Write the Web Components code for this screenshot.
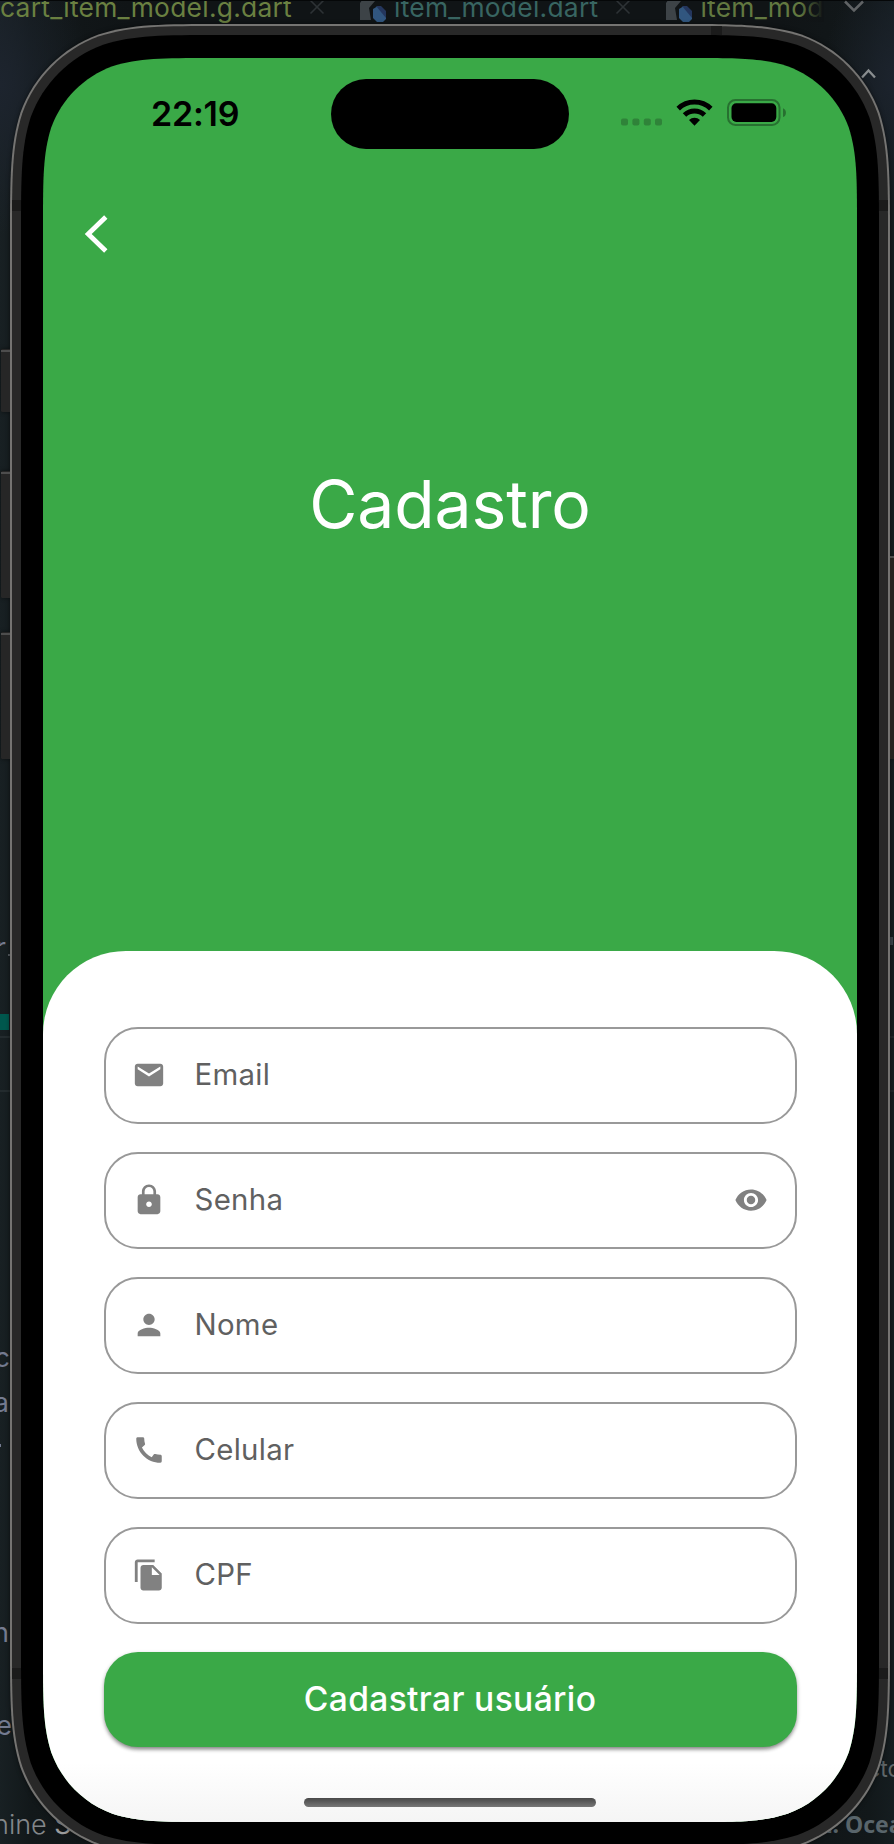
<!DOCTYPE html>
<html lang="pt-BR">
<head>
<meta charset="utf-8">
<title>Cadastro</title>
<style>
html,body{margin:0;width:894px;height:1844px;overflow:hidden;background:#161e21;font-family:Inter,"Liberation Sans",sans-serif}
</style>
</head>
<body>
<desk-scene>
  <code-desktop slot="back"></code-desktop>
  <phone-shell>
    <status-bar slot="status"></status-bar>
    <register-page></register-page>
  </phone-shell>
</desk-scene>
<script>
const define = (name, html, setup) => {
  const t = document.createElement('template');
  t.innerHTML = html;
  customElements.define(name, class extends HTMLElement {
    constructor(){ super(); this.attachShadow({mode:'open'}).append(t.content.cloneNode(true)); }
    connectedCallback(){ if (setup) setup(this, this.shadowRoot); }
  });
};

// Rounded rectangle with continuous-curvature corners.
const smoothRect = (x, y, w, h, r) => {
  const k = [1.52866498, 1.08849296, 0.86840694, 0.63149379, 0.07491139, 0.37282383, 0.16905956].map(v => v * r);
  const [a,b,c,d,e,f,g] = k, X = x + w, Y = y + h;
  return `M${x+a} ${y}L${X-a} ${y}C${X-b} ${y} ${X-c} ${y} ${X-d} ${y+e}C${X-f} ${y+g} ${X-g} ${y+f} ${X-e} ${y+d}C${X} ${y+c} ${X} ${y+b} ${X} ${y+a}`
   + `L${X} ${Y-a}C${X} ${Y-b} ${X} ${Y-c} ${X-e} ${Y-d}C${X-g} ${Y-f} ${X-f} ${Y-g} ${X-d} ${Y-e}C${X-c} ${Y} ${X-b} ${Y} ${X-a} ${Y}`
   + `L${x+a} ${Y}C${x+b} ${Y} ${x+c} ${Y} ${x+d} ${Y-e}C${x+f} ${Y-g} ${x+g} ${Y-f} ${x+e} ${Y-d}C${x} ${Y-c} ${x} ${Y-b} ${x} ${Y-a}`
   + `L${x} ${y+a}C${x} ${y+b} ${x} ${y+c} ${x+e} ${y+d}C${x+g} ${y+f} ${x+f} ${y+g} ${x+d} ${y+e}C${x+c} ${y} ${x+b} ${y} ${x+a} ${y}Z`;
};

define('desk-scene', `<style>
:host{display:block;position:relative;width:894px;height:1844px;overflow:hidden}
.back{position:absolute;inset:0}
.front{position:relative;padding:24px 0 0 10px}
</style><div class="back"><slot name="back"></slot></div><div class="front"><slot></slot></div>`);

define('editor-tab', `<style>
:host{display:flex;align-items:center;color:var(--c);font-size:26.4px;line-height:30px;white-space:nowrap;height:30px}
svg{display:block;flex:none}
.name{flex:none;letter-spacing:.25px}
.icon{margin-right:6px}
.x{margin-left:17px}
:host([first]) .icon,:host([last]) .x{display:none}
</style>
<svg class="icon" width="28" height="30" viewBox="0 0 28 30"><path d="M0 11L8 0H21V9H15L9 16L11 28H0Z" fill="#3d4347"/><path d="M13 17L18 14L26 22V27L23 30H17L13 26Z" fill="#31567f"/><path d="M16 14H21L26 19V26Z" fill="#24365d"/></svg>
<span class="name"><slot></slot></span>
<svg class="x" width="16" height="16" viewBox="0 0 16 16"><path d="M1.5 1.5L14.5 14.5M14.5 1.5L1.5 14.5" stroke="#2d3235" stroke-width="1.6"/></svg>`);

define('code-desktop', `<style>
:host{display:block;position:relative;width:894px;height:1844px;overflow:hidden;
background:radial-gradient(90px 150px at 0 85px,#1d242e,transparent),radial-gradient(70px 120px at 894px 80px,#1c232d,transparent),linear-gradient(90deg,#182023,#12181a 30px,#101416 130px,#101416 780px,#12181a 870px,#151d20)}
.top{position:absolute;left:0;top:0;right:0;height:1px;background:#050708}
.tabs{position:absolute;left:0;top:-8px;display:flex;width:824px}
editor-tab:nth-child(2){margin-left:35px}
editor-tab:nth-child(3){margin-left:35px}
.tabs:after{content:"";position:absolute;right:0;top:0;width:24px;height:30px;background:linear-gradient(90deg,transparent,#101416)}
.bit{position:absolute;overflow:hidden;white-space:nowrap;color:#747b90;font-size:27px;line-height:30px;height:30px}
.l{left:0;display:flex;justify-content:flex-end}
.bar{position:absolute}
svg{position:absolute}
</style>
<div class="tabs"><editor-tab first style="--c:#6a8041">cart_item_model.g.dart</editor-tab><editor-tab style="--c:#386561">item_model.dart</editor-tab><editor-tab last style="--c:#627840">item_mod</editor-tab></div>
<div class="top"></div>
<svg style="left:842px;top:0" width="24" height="14" viewBox="0 0 24 14"><path d="M3 1.5L12 10.5L21 1.5" fill="none" stroke="#606365" stroke-width="2.5"/></svg>
<svg style="left:858px;top:64px" width="20" height="18" viewBox="0 0 20 18"><path d="M4 13.5L10.5 6.5L17 13.5" fill="none" stroke="#898d8f" stroke-width="2.3"/></svg>
<div class="bit l" style="width:6px;top:933px;height:13px">r</div>
<div class="bar" style="left:8px;top:954px;width:3px;height:2px;background:#555b60"></div>
<div class="bar" style="left:0;top:1014px;width:9px;height:16px;background:#00574d"></div>
<div class="bar" style="left:0;top:1036px;width:10px;height:2px;background:#232b2e"></div>
<div class="bar" style="left:0;top:1090px;width:10px;height:2px;background:#232b2e"></div>
<div class="bit l" style="width:10px;top:1343px">c</div>
<div class="bit l" style="width:9px;top:1388px">a</div>
<div class="bar" style="left:0;top:1444px;width:1px;height:3px;background:#747b90"></div>
<div class="bit l" style="width:9px;top:1618px">n</div>
<div class="bit l" style="width:12px;top:1711px">e</div>
<div class="bit" style="left:-7px;top:1810px;font-weight:300;color:#83878a">nine <b style="color:#9b9c9d">St</b></div>
<div class="bar" style="left:890px;top:937px;width:3px;height:8px;background:#3d454c"></div>
<div class="bar" style="left:890px;top:1036px;width:4px;height:2px;background:#20272a"></div>
<div class="bar" style="left:890px;top:1090px;width:4px;height:2px;background:#20272a"></div>
<div class="bit" style="left:867px;top:1754px;width:40px;font-size:23px;color:#5f6669">ctor</div>
<div class="bit" style="left:826px;top:1809px;font-size:23px;font-weight:700;color:#59656b;font-family:'Noto Sans'">r. Ocean</div>`);

define('phone-shell', `<style>
:host{display:block;position:relative;width:880px;height:1832px}
.art{position:absolute;left:-10px;top:-24px;display:block;filter:drop-shadow(0 0 2px #0008)}
.wrap{box-sizing:border-box;position:relative;padding:34px 33px}
.screen{position:relative;display:flex;flex-direction:column;width:814px;height:1764px;background:#3aa947;overflow:hidden}
.home{position:absolute;left:0;right:0;bottom:0;height:60px;display:flex;justify-content:center;align-items:flex-end;background:linear-gradient(#fff0,#f5f5f5)}
.home i{width:292px;height:9.5px;margin-bottom:15px;border-radius:5px;background:linear-gradient(#484848,#777)}
</style>
<svg class="art" width="894" height="1860" viewBox="0 0 894 1860">
<g fill="#262626"><rect x="1" y="349" width="12" height="63" rx="1.5"/><rect x="1" y="471" width="12" height="127" rx="1.5"/><rect x="1" y="632" width="12" height="127" rx="1.5"/><rect x="887" y="556" width="12" height="203" fill="#25221f"/></g>
<path d="M1 351H10M1 473H10M1 634H10M890 557H894" stroke="#4d4d4d" stroke-width="2"/>
<path id="rim" fill="#757472"/><path id="body" fill="#282828"/>
<path d="M12 200h9v11h-9zM879 200h9v11h-9zM711 26h11v9h-11zM12 1668h9v11h-9zM879 1668h9v11h-9z" fill="#1b1b1b"/>
<path id="glass"/></svg>
<div class="wrap"><div class="screen"><slot name="status"></slot><slot></slot><div class="home"><i></i></div></div></div>`,
(h, s) => {
  s.getElementById('rim').setAttribute('d', smoothRect(10, 24, 880, 1832, 140));
  s.getElementById('body').setAttribute('d', smoothRect(12, 26, 876, 1828, 138));
  s.getElementById('glass').setAttribute('d', smoothRect(21, 35, 858, 1810, 130));
  s.querySelector('.screen').style.clipPath = `path("${smoothRect(0, 0, 814, 1764, 110)}")`;
});

define('status-bar', `<style>
:host{display:flex;height:91px;flex:none;padding-top:21px;box-sizing:border-box;align-items:flex-start}
.time{box-sizing:border-box;width:288px;padding:14px 0 0 108px;font-size:34px;line-height:42px;font-weight:600;letter-spacing:-.2px;color:#000}
.island{width:238px;height:70px;border-radius:35px;background:#000}
svg{margin:16px 0 0 48px}
</style><div class="time">22:19</div><div class="island"></div>
<svg width="172" height="36" viewBox="0 0 172 36">
<g fill="#2f8339" transform="translate(-617,-95)"><rect x="621" y="118.5" width="7" height="7" rx="2"/><rect x="632.4" y="118.5" width="7" height="7" rx="2"/><rect x="643.8" y="118.5" width="7" height="7" rx="2"/><rect x="655" y="118.5" width="7" height="7" rx="2"/></g>
<g transform="translate(-617,-95)"><g fill="none" stroke="#000" stroke-width="5"><path d="M678.2 108.6A23.5 23.5 0 0 1 710.8 108.6"/><path d="M684.5 115A14.5 14.5 0 0 1 704.5 115"/></g><path d="M694.5 125.8L689 120A8 8 0 0 1 700 120Z"/>
<rect x="728" y="100" width="51.5" height="25" rx="7.5" fill="none" stroke="#277030" stroke-width="2"/><rect x="731.5" y="103.3" width="44.8" height="18.6" rx="4.8"/><path d="M783 108.3A4.7 4.7 0 0 1 783 117Z" fill="#277030"/></g></svg>`);

define('register-page', `<style>
:host{display:flex;flex-direction:column;flex:1}
header{height:802px;flex:none;display:flex;flex-direction:column}
.back{display:block;margin:63px 0 0 37.5px;width:32px;height:44px;flex:none}
h1{margin:208px 0 0;text-align:center;color:#fff;font-weight:400;font-size:66px;line-height:80px;letter-spacing:-.1px}
main{flex:1;background:#fff;border-radius:83px 83px 0 0;padding:76px 60.5px 0 60.5px;display:flex;flex-direction:column;gap:28.5px}
</style>
<header><svg class="back" viewBox="0 0 32 44"><path d="M24.8 5L7.2 22L24.8 39" fill="none" stroke="#fff" stroke-width="4.8"/></svg><h1>Cadastro</h1></header>
<main>
<form-field icon="mail">Email</form-field>
<form-field icon="lock" reveal>Senha</form-field>
<form-field icon="person">Nome</form-field>
<form-field icon="phone">Celular</form-field>
<form-field icon="copy">CPF</form-field>
<primary-button>Cadastrar usuário</primary-button>
</main>`);

const ICONS = {
  mail:'M20 4H4c-1.1 0-1.99.9-1.99 2L2 18c0 1.1.9 2 2 2h16c1.1 0 2-.9 2-2V6c0-1.1-.9-2-2-2zm0 4l-8 5-8-5V6l8 5 8-5v2z',
  lock:'M18 8h-1V6c0-2.76-2.24-5-5-5S7 3.24 7 6v2H6c-1.1 0-2 .9-2 2v10c0 1.1.9 2 2 2h12c1.1 0 2-.9 2-2V10c0-1.1-.9-2-2-2zm-6 9c-1.1 0-2-.9-2-2s.9-2 2-2 2 .9 2 2-.9 2-2 2zm3.1-9H8.9V6c0-1.71 1.39-3.1 3.1-3.1s3.1 1.39 3.1 3.1v2z',
  person:'M12 12c2.21 0 4-1.79 4-4s-1.79-4-4-4-4 1.79-4 4 1.79 4 4 4zm0 2c-2.67 0-8 1.34-8 4v2h16v-2c0-2.66-5.33-4-8-4z',
  phone:'M20.01 15.38c-1.23 0-2.42-.2-3.53-.56-.35-.12-.74-.03-1.01.24l-1.57 1.97c-2.83-1.35-5.48-3.9-6.89-6.83l1.95-1.66c.27-.28.35-.67.24-1.02-.37-1.11-.56-2.3-.56-3.53 0-.54-.45-.99-.99-.99H4.19C3.65 3 3 3.24 3 3.99 3 13.28 10.73 21 20.01 21c.71 0 .99-.63.99-1.18v-3.45c0-.54-.45-.99-.99-.99z',
  copy:'M16 1H4c-1.1 0-2 .9-2 2v14h2V3h12V1zm-1 4l6 6v10c0 1.1-.9 2-2 2H7.99C6.89 23 6 22.1 6 21l.01-14c0-1.1.89-2 1.99-2h7zm-1 7h5.5L14 6.5V12z',
  eye:'M12 4.5C7 4.5 2.73 7.61 1 12c1.73 4.39 6 7.5 11 7.5s9.27-3.11 11-7.5c-1.73-4.39-6-7.5-11-7.5zM12 17c-2.76 0-5-2.24-5-5s2.24-5 5-5 5 2.24 5 5-2.24 5-5 5zm0-8c-1.66 0-3 1.34-3 3s1.34 3 3 3 3-1.34 3-3-1.34-3-3-3z'
};
define('glyph-icon', `<style>:host{display:block;width:34px;height:34px;flex:none}svg{display:block}</style><svg width="34" height="34" viewBox="0 0 24 24"><path fill="#818181"/></svg>`,
 (h, s) => s.querySelector('path').setAttribute('d', ICONS[h.getAttribute('name')]));

define('form-field', `<style>
:host{display:flex;align-items:center;box-sizing:border-box;height:96.5px;flex:none;border:2px solid #999;border-radius:34px;padding:0 26.5px;color:#606060;font-size:29.4px;line-height:36px}
.label{flex:1;padding:0 0 1.5px 28.5px;letter-spacing:.3px}
</style><span class="label"><slot></slot></span>`,
(h, s) => {
  const icon = name => {
    const e = document.createElement('glyph-icon');
    e.setAttribute('name', name);
    return e;
  };
  s.querySelector('.label').before(icon(h.getAttribute('icon')));
  if (h.hasAttribute('reveal')) s.append(icon('eye'));
});

define('primary-button', `<style>
:host{display:flex;align-items:center;justify-content:center;height:94.5px;flex:none;border-radius:34px;background:#3aa947;color:#fff;font-size:33.6px;font-weight:500;line-height:40px;letter-spacing:.35px;box-shadow:0 2px 4px #0005,0 4px 4px -2px #0004}
</style><slot></slot>`);
</script>
</body>
</html>
